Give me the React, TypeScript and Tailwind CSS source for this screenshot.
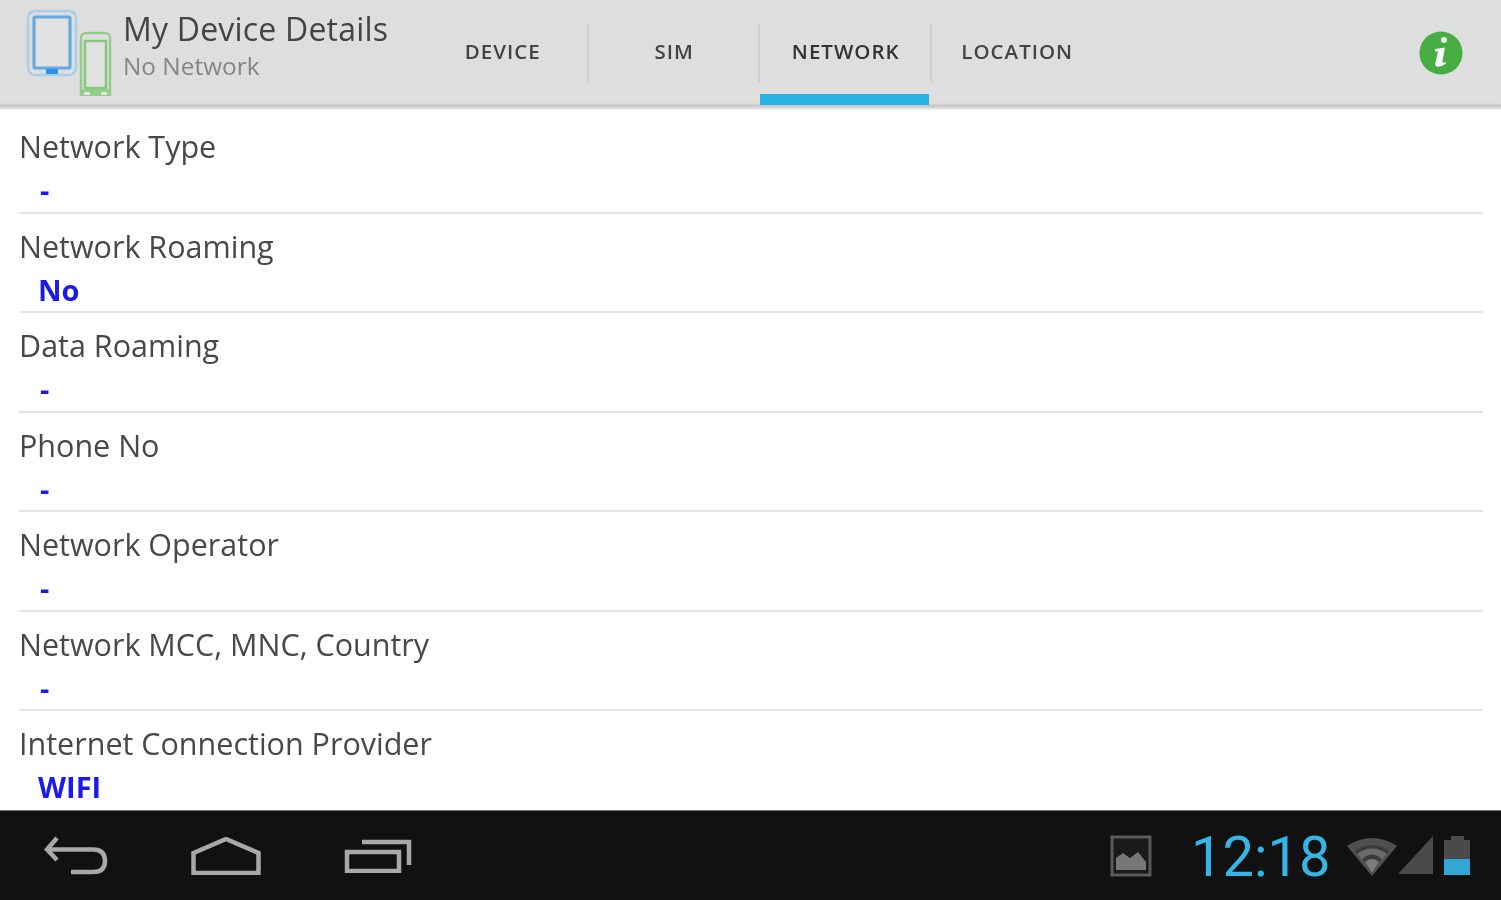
const rows = [
  { label: "Network Type", value: "-" },
  { label: "Network Roaming", value: "No" },
  { label: "Data Roaming", value: "-" },
  { label: "Phone No", value: "-" },
  { label: "Network Operator", value: "-" },
  { label: "Network MCC, MNC, Country", value: "-" },
  { label: "Internet Connection Provider", value: "WIFI" },
];

const tabs = ["DEVICE", "SIM", "NETWORK", "LOCATION"];

function Logo() {
  return (
    <svg width="90" height="88" viewBox="0 0 90 88" fill="none" className="shrink-0">
      <rect x="3" y="3" width="48" height="64" rx="7" stroke="#a9cdea" strokeWidth="2.5" fill="#dedede" />
      <rect x="9" y="9" width="36" height="51" rx="1" stroke="#62a8e2" strokeWidth="3" fill="#e2e2e2" />
      <rect x="21" y="61" width="12" height="5" fill="#2b93e6" />
      <rect x="56" y="25" width="29" height="68" rx="5" stroke="#93cd8c" strokeWidth="2.5" fill="#dedede" />
      <rect x="60" y="33" width="21" height="47" stroke="#86c97e" strokeWidth="2.5" fill="#e2e2e2" />
      <rect x="56" y="81" width="29" height="11" rx="3" fill="#93cd8c" />
      <rect x="59" y="84" width="6" height="3" fill="#dcecd9" />
      <rect x="76" y="84" width="6" height="3" fill="#dcecd9" />
    </svg>
  );
}

function InfoIcon() {
  return (
    <svg width="44" height="44" viewBox="0 0 44 44">
      <circle cx="22" cy="22" r="21.5" fill="#47ac41" />
      <circle cx="25" cy="9" r="3" fill="#f3f8f2" />
      <path d="M16 18 L26 16.5 L23.5 30 Q23.2 33 26.5 31 L27 32.5 Q22 36.5 17.5 35.5 Q15.5 34.5 16.5 31 L19 20.5 L16 20.5 Z" fill="#f3f8f2" />
    </svg>
  );
}

function NavIcons() {
  return (
    <div className="flex items-center">
      <svg width="66" height="40" viewBox="0 0 66 40" fill="none" stroke="#a8a8a8" strokeWidth="4.5" className="ml-[43px]">
        <path d="M14 2 L4 13.5 L14 24" />
        <path d="M5 13.5 H50 Q62 13.5 62 25 Q62 36 50 36 H28" />
      </svg>
      <svg width="70" height="38" viewBox="0 0 70 38" fill="none" stroke="#a8a8a8" strokeWidth="4.5" className="ml-[82px]">
        <path d="M2.5 16 L35 2 L67.5 16 V36 H2.5 Z" />
      </svg>
      <svg width="68" height="34" viewBox="0 0 68 34" fill="none" stroke="#a8a8a8" strokeWidth="4.5" className="ml-[83px]">
        <rect x="3" y="13" width="52" height="19" />
        <path d="M18 3 H65 V26" />
      </svg>
    </div>
  );
}

function StatusIcons() {
  return (
    <div className="flex items-center">
      <svg width="42" height="42" viewBox="0 0 42 42" fill="none">
        <rect x="2" y="2" width="38" height="38" stroke="#5a5a5a" strokeWidth="3" fill="#1a1a1a" />
        <path d="M6 35 V23 L13 18 L20 23 L28 17 L36 27 V35 Z" fill="#777777" />
      </svg>
      <span className="ml-[39px] mt-[2px] w-[143px] text-[56px] leading-none text-[#33b5e5] font-['Roboto',sans-serif]">
        12:18
      </span>
      <svg width="50" height="40" viewBox="0 0 50 40" className="ml-[13px]">
        <path d="M0 10 Q25 -6 50 10 L25 40 Z" fill="#505050" />
        <path d="M7 15 Q25 3 43 15 L25 38 Z" fill="#3c3c3c" />
        <path d="M10 18 Q25 7 40 18 L25 38 Z" fill="#6a6a6a" />
        <path d="M15 23 Q25 14 35 23 L25 38 Z" fill="#3c3c3c" />
        <path d="M18 26 Q25 20 32 26 L25 37 Z" fill="#7c7c7c" />
      </svg>
      <svg width="36" height="40" viewBox="0 0 36 40" className="ml-[1px]">
        <path d="M0 38 L35 0 V38 Z" fill="#4a4a4a" />
      </svg>
      <div className="ml-[10px] flex flex-col items-center">
        <div className="h-[4px] w-[13px] bg-[#4a4a4a]" />
        <div className="flex h-[35px] w-[26px] flex-col justify-end bg-[#4a4a4a]">
          <div className="h-[16px] bg-[#33a5d6]" />
        </div>
      </div>
    </div>
  );
}

export default function App() {
  return (
    <div className="flex h-[900px] w-[1501px] flex-col overflow-hidden bg-white font-['Open_Sans',sans-serif] blur-[0.6px]">
      <header className="flex h-[110px] shrink-0 bg-[linear-gradient(to_bottom,#dedede_0,#dedede_103px,#c4c4c4_106px,#f6f6f6_110px)]">
        <div className="ml-[25px] mt-[8px]">
          <Logo />
        </div>
        <div className="ml-[8px] mt-[10px] w-[294px]">
          <div className="text-[32px] leading-[38px] tracking-[0.2px] text-[#444444]">My Device Details</div>
          <div className="mt-[1px] text-[24.4px] leading-[34px] text-[#858585]">No Network</div>
        </div>
        <nav className="flex">
          {tabs.map((tab, i) => (
            <div key={tab} className="relative flex h-[105px] w-[171.5px] items-start justify-center pt-[36px]">
              <span className={`text-[20.5px] leading-[30px] font-semibold tracking-[1px] ${tab === "NETWORK" ? "text-[#333333]" : "text-[#444444]"}`}>
                {tab}
              </span>
              {i < 3 && <div className="absolute right-0 top-[24px] h-[58px] w-[2px] bg-[#d0d0d0]" />}
              {tab === "NETWORK" && <div className="absolute bottom-0 left-0 right-[3px] h-[11px] bg-[#29b2e6]" />}
            </div>
          ))}
        </nav>
        <div className="ml-auto mr-[38px] mt-[31px]">
          <InfoIcon />
        </div>
      </header>
      <main className="flex-1 overflow-hidden pl-[19px] pr-[18px] pt-[4px]">
        {rows.map((row, i) => (
          <div key={row.label} className={`h-[99.5px] pt-[12px] ${i < 6 ? "border-b-2 border-[#e4e4e4]" : ""}`}>
            <div className="text-[30.5px] leading-[40px] text-[#484848]">{row.label}</div>
            <div className={`mt-[4px] text-[29px] font-bold leading-[40px] text-[#1a1aee] ${row.value === "-" ? "pl-[21px]" : "pl-[19px]"}`}>
              {row.value}
            </div>
          </div>
        ))}
      </main>
      <footer className="flex h-[90px] shrink-0 items-center justify-between border-t border-[#777777] bg-[#111111] pr-[31px]">
        <NavIcons />
        <StatusIcons />
      </footer>
    </div>
  );
}
